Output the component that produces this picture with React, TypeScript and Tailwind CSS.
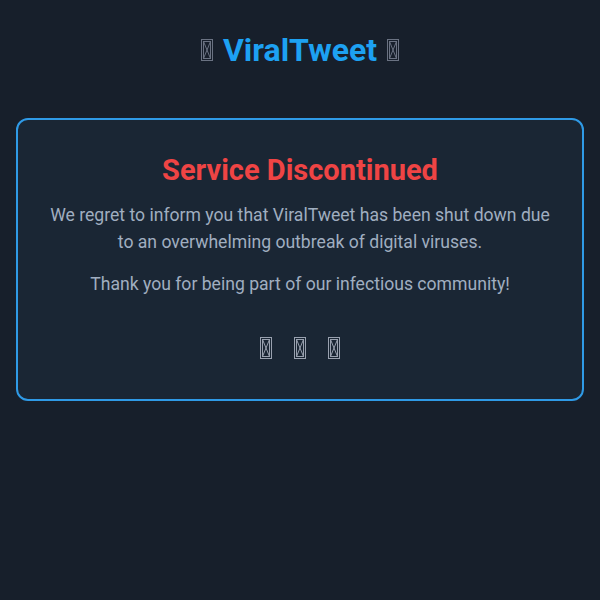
function Tofu({ className = '' }: { className?: string }) {
  // missing-glyph box, as the emoji render in the reference
  return (
    <svg viewBox="0 0 12 22" className={`inline-block h-[22px] w-[12px] ${className}`} fill="none" stroke="currentColor" strokeWidth="1">
      <rect x="0.5" y="0.5" width="11" height="21" />
      <rect x="2.5" y="2.5" width="7" height="17" />
      <path d="M2.5 2.5 L9.5 19.5 M9.5 2.5 L2.5 19.5" />
    </svg>
  );
}

export default function App() {
  return (
    <div className="min-h-[600px] w-full bg-[#171f2b] px-4 pt-7 font-['Roboto',sans-serif]">
      <h1 className="flex items-center justify-center gap-[10px] text-[32px] font-bold leading-[44px] text-[#1da1f2]">
        <Tofu className="text-gray-500" />
        <span>ViralTweet</span>
        <Tofu className="text-gray-500" />
      </h1>
      <div className="mt-[46px] rounded-xl border-2 border-[#2f9ae6] bg-[#1a2634] px-7 pt-[30px] pb-[40px] text-center">
        <h2 className="text-[29px] font-bold leading-10 text-[#ef4444]">Service Discontinued</h2>
        <p className="mt-[12px] text-[17.6px] leading-[27px] text-[#a0aec0]">
          We regret to inform you that ViralTweet has been shut down due to an overwhelming outbreak of digital viruses.
        </p>
        <p className="mt-[15px] text-[17.6px] leading-[27px] text-[#a0aec0]">
          Thank you for being part of our infectious community!
        </p>
        <div className="mt-[39px] flex justify-center gap-[22px] text-gray-400">
          <Tofu />
          <Tofu />
          <Tofu />
        </div>
      </div>
    </div>
  );
}
